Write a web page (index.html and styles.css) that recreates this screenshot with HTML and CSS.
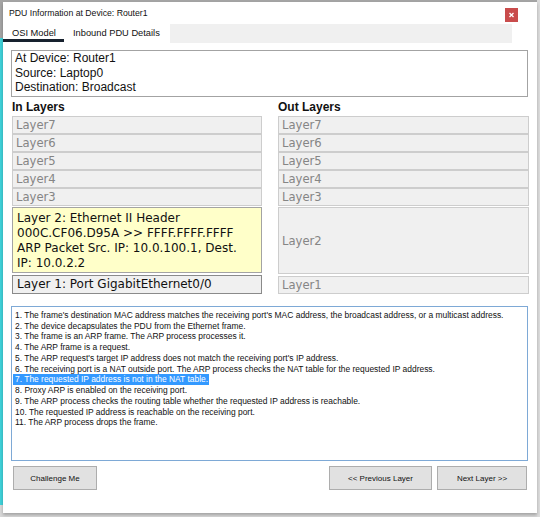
FILE: index.html
```html
<!DOCTYPE html>
<html>
<head>
<meta charset="utf-8">
<link rel="stylesheet" href="styles.css">
</head>
<body>
<div class="window">
  <div class="titlebar">
    <span class="title">PDU Information at Device: Router1</span>
    <span class="close"><svg width="13" height="14" viewBox="0 0 13 14"><path d="M4.5 5 L8.5 9 M8.5 5 L4.5 9" stroke="#fff" stroke-width="1.3"/></svg></span>
  </div>
  <div class="tabbar">
    <div class="tab active">OSI Model</div>
    <div class="tab">Inbound PDU Details</div>
    <div class="tabfill"></div>
  </div>
  <div class="content">
    <div class="info">
      <div>At Device: Router1</div>
      <div>Source: Laptop0</div>
      <div>Destination: Broadcast</div>
    </div>
    <div class="layers">
      <div class="col">
        <div class="colhead">In Layers</div>
        <div class="row">Layer7</div>
        <div class="row">Layer6</div>
        <div class="row">Layer5</div>
        <div class="row">Layer4</div>
        <div class="row">Layer3</div>
        <div class="l2box">
          <div>Layer 2: Ethernet II Header</div>
          <div>000C.CF06.D95A &gt;&gt; FFFF.FFFF.FFFF</div>
          <div>ARP Packet Src. IP: 10.0.100.1, Dest.</div>
          <div>IP: 10.0.2.2</div>
        </div>
        <div class="l1box">Layer 1: Port GigabitEthernet0/0</div>
      </div>
      <div class="col">
        <div class="colhead">Out Layers</div>
        <div class="row">Layer7</div>
        <div class="row">Layer6</div>
        <div class="row">Layer5</div>
        <div class="row">Layer4</div>
        <div class="row">Layer3</div>
        <div class="row out2">Layer2</div>
        <div class="row out1">Layer1</div>
      </div>
    </div>
    <div class="steps">
      <div>1. The frame's destination MAC address matches the receiving port's MAC address, the broadcast address, or a multicast address.</div>
      <div>2. The device decapsulates the PDU from the Ethernet frame.</div>
      <div>3. The frame is an ARP frame. The ARP process processes it.</div>
      <div>4. The ARP frame is a request.</div>
      <div>5. The ARP request's target IP address does not match the receiving port's IP address.</div>
      <div>6. The receiving port is a NAT outside port. The ARP process checks the NAT table for the requested IP address.</div>
      <div><span class="sel">7. The requested IP address is not in the NAT table.</span></div>
      <div>8. Proxy ARP is enabled on the receiving port.</div>
      <div>9. The ARP process checks the routing table whether the requested IP address is reachable.</div>
      <div>10. The requested IP address is reachable on the receiving port.</div>
      <div>11. The ARP process drops the frame.</div>
    </div>
    <div class="buttons">
      <button class="btn challenge">Challenge Me</button>
      <div class="spacer"></div>
      <button class="btn prev">&lt;&lt; Previous Layer</button>
      <button class="btn next">Next Layer &gt;&gt;</button>
    </div>
  </div>
</div>
</body>
</html>
```
FILE: styles.css
```css
html, body {
  margin: 0;
  padding: 0;
}
body {
  width: 540px;
  height: 517px;
  overflow: hidden;
  background:
    linear-gradient(to right, transparent 0 537px, #dcdcdc 537px),
    linear-gradient(to bottom, #a4a4a4 0 38px, #3fd2da 38px 505px, #d8d8d8 505px);
  font-family: "Liberation Sans", Arial, sans-serif;
}
.window {
  margin: 2px 3px 0 3px;
  width: 534px;
  height: 511px;
  background: #fff;
  box-shadow: 0 2px 3px rgba(0,0,0,0.25);
}
.titlebar {
  height: 22px;
  display: flex;
  align-items: center;
  padding-left: 6px;
  padding-right: 19px;
}
.title {
  flex: 1;
  font-size: 8.7px;
  color: #111;
}
.close {
  width: 13px;
  height: 14px;
  background: #c94c4c;
  display: flex;
  margin-top: 4px;
}
.tabbar {
  display: flex;
  height: 19px;
}
.tab {
  font-size: 9.3px;
  color: #111;
  padding-left: 9px;
  box-sizing: border-box;
  padding-top: 4px;
}
.tab.active {
  width: 61px;
  border-bottom: 3px solid #17212e;
  height: 18px;
}
.tab:nth-child(2) {
  width: 106px;
}
.tabfill {
  width: 342px;
  background: #f0f0f0;
}
.content {
  padding: 0 9px 0 8px;
}
.info {
  margin-top: 7px;
  border: 1px solid #a3a3a3;
  height: 45px;
  padding: 0 3px;
  font-size: 12px;
  line-height: 14.6px;
  color: #111;
}
.layers {
  display: grid;
  grid-template-columns: 250px 251px;
  column-gap: 16px;
  margin-left: 1px;
}
.col {
  display: flex;
  flex-direction: column;
}
.colhead {
  font-weight: bold;
  font-size: 12px;
  height: 16px;
  line-height: 14px;
  padding-top: 3px;
  color: #111;
}
.row {
  box-sizing: border-box;
  height: 18px;
  background: #f0f0f0;
  border: 1px solid #cdcdcd;
  font-family: "DejaVu Sans", Verdana, sans-serif;
  font-size: 11.6px;
  color: #858585;
  padding-left: 3px;
  line-height: 16px;
}
.l2box {
  box-sizing: border-box;
  margin-top: 1px;
  height: 66px;
  background: #ffffc9;
  border: 1px solid #a3a3a3;
  font-family: "DejaVu Sans", Verdana, sans-serif;
  font-size: 12px;
  line-height: 15px;
  color: #111;
  padding: 3px 4px 0;
}
.l1box {
  box-sizing: border-box;
  margin-top: 2px;
  height: 19px;
  background: #f0f0f0;
  border: 1px solid #8a8a8a;
  font-family: "DejaVu Sans", Verdana, sans-serif;
  font-size: 12px;
  line-height: 17px;
  color: #111;
  padding-left: 4px;
}
.row.out2 {
  margin-top: 1px;
  height: 67px;
  display: flex;
  align-items: center;
}
.row.out1 {
  margin-top: 2px;
  height: 18px;
}
.steps {
  margin-top: 12px;
  box-sizing: border-box;
  height: 155px;
  border: 1px solid #7ea9d6;
  padding: 3px 3px 0;
  font-size: 8.45px;
  line-height: 10.7px;
  color: #111;
  white-space: nowrap;
  overflow: hidden;
}
.sel {
  display: inline-block;
  background: #3399ff;
  color: #fff;
  margin-left: -2px;
  padding-left: 2px;
  padding-right: 1px;
  line-height: 11px;
}
.buttons {
  display: flex;
  margin-top: 5px;
  gap: 5px;
  margin-left: 2px;
}
.spacer {
  flex: 1;
}
.btn {
  height: 24px;
  background: #e1e1e1;
  border: 1px solid #adadad;
  font-family: "Liberation Sans", Arial, sans-serif;
  font-size: 8px;
  color: #111;
  padding: 0;
  margin: 0;
}
.challenge { width: 84px; }
.prev { width: 103px; }
.next { width: 90px; margin-right: 1px; }
```
